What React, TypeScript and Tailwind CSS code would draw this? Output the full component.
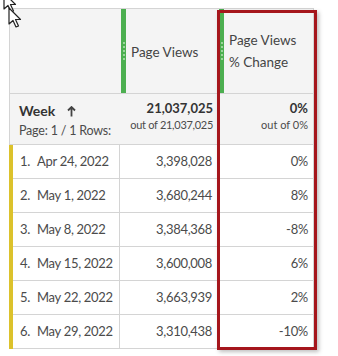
import React from 'react';

const rows = [
  { n: 1, week: 'Apr 24, 2022', views: '3,398,028', change: '0%' },
  { n: 2, week: 'May 1, 2022', views: '3,680,244', change: '8%' },
  { n: 3, week: 'May 8, 2022', views: '3,384,368', change: '-8%' },
  { n: 4, week: 'May 15, 2022', views: '3,600,008', change: '6%' },
  { n: 5, week: 'May 22, 2022', views: '3,663,939', change: '2%' },
  { n: 6, week: 'May 29, 2022', views: '3,310,438', change: '-10%' },
];

function Cursor({ className }: { className: string }) {
  return (
    <svg className={className} width="14" height="22" viewBox="0 0 14 22">
      <path d="M1 1 L1 17 L5 13.5 L8 20 L10.5 19 L7.5 12.5 L12.5 12.5 Z" fill="white" stroke="#222" strokeWidth="1.2" strokeLinejoin="round" />
    </svg>
  );
}

function GreenGrip() {
  return (
    <div className="w-[5px] h-full bg-[#4caf50] flex flex-col items-center justify-center gap-[2px]">
      {[0, 1, 2, 3, 4].map((i) => (
        <div key={i} className="w-[2px] h-[2px] rounded-full bg-[#b6e2b6]" />
      ))}
    </div>
  );
}

export default function App() {
  return (
    <div className="relative w-[338px] h-[356px] bg-white overflow-hidden font-['Lato',sans-serif] text-[#4b4b4b]">
      <div className="pt-2 pl-[9px]">
        <div className="w-[305px] border-l border-t border-[#d4d4d4]">
          {/* header */}
          <div className="flex h-[85px] bg-[#f4f4f4] border-b border-r border-[#d4d4d4]">
            <div className="w-[110px]" />
            <div className="w-[98px] flex pl-[1px]">
              <GreenGrip />
              <div className="flex items-center pl-[5px] pt-[3px] text-[13.5px] text-[#444]">Page Views</div>
            </div>
            <div className="flex-1 flex pl-[1px]">
              <GreenGrip />
              <div className="flex flex-col justify-center pl-[5px] text-[13.5px] leading-[22px] text-[#444] -mt-[1px]">
                <span>Page Views</span>
                <span>% Change</span>
              </div>
            </div>
          </div>
          {/* summary */}
          <div className="flex h-[51px] bg-[#f4f4f4] border-b border-r border-[#d4d4d4]">
            <div className="w-[110px] pl-[9px] pt-[9px]">
              <div className="flex items-center text-[14px] font-bold text-[#333] leading-[16px]">
                Week
                <svg className="ml-[12px]" width="9" height="11" viewBox="0 0 9 11">
                  <path d="M4.5 1 L4.5 10.5 M1 4.5 L4.5 1 L8 4.5" fill="none" stroke="#444" strokeWidth="1.8" />
                </svg>
              </div>
              <div className="text-[12.5px] mt-[4px] whitespace-nowrap leading-[16px] tracking-[-0.2px]">Page: 1 / 1 Rows:</div>
            </div>
            <div className="w-[98px] pr-[5px] pt-[6px] text-right">
              <div className="text-[13px] font-bold text-[#333] leading-[16px]">21,037,025</div>
              <div className="text-[11px] leading-[14px] mt-[2px] tracking-[-0.3px] whitespace-nowrap">out of 21,037,025</div>
            </div>
            <div className="flex-1 pr-[5px] pt-[6px] text-right">
              <div className="text-[13px] font-bold text-[#333] leading-[16px]">0%</div>
              <div className="text-[11px] leading-[14px] mt-[2px]">out of 0%</div>
            </div>
          </div>
          {/* rows */}
          {rows.map((r) => (
            <div key={r.n} className="flex h-[34px] border-b border-r border-[#d4d4d4] bg-white text-[13px] tracking-[-0.3px]">
              <div className="relative w-[110px] border-r border-[#d4d4d4] flex items-center pl-[10px]">
                <div className="absolute -left-[1px] top-0 bottom-[-1px] w-[4px] bg-[#dcc22c]" />
                <span className="w-[17px]">{r.n}.</span>
                <span>{r.week}</span>
              </div>
              <div className="w-[98px] border-r border-[#d4d4d4] flex items-center justify-end pr-[5px]">{r.views}</div>
              <div className="flex-1 flex items-center justify-end pr-[5px]">{r.change}</div>
            </div>
          ))}
        </div>
      </div>
      {/* highlight box */}
      <div className="absolute left-[217px] top-[10px] w-[100px] h-[340px] border-[3px] border-[#a5161c] shadow-[2px_2px_4px_rgba(0,0,0,0.25)]" />
      <Cursor className="absolute left-[3px] -top-[8px]" />
      <Cursor className="absolute left-[8px] top-[7px]" />
    </div>
  );
}
